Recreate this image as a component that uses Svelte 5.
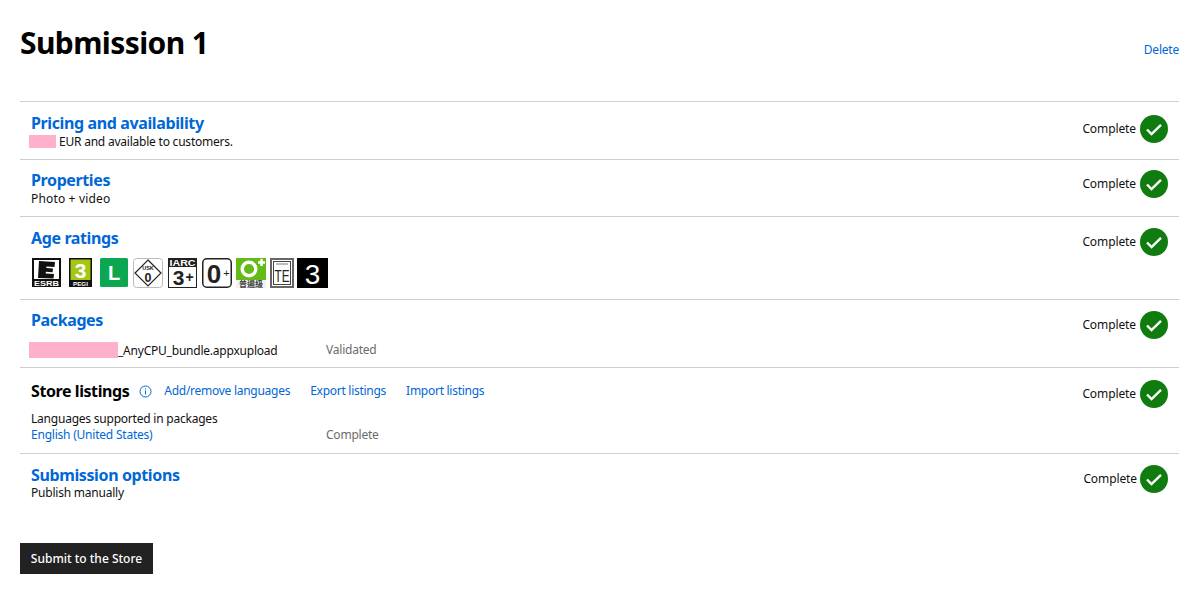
<script>
  const label = 'Complete';
</script>

{#snippet status()}
  <div class="status">
    <span>{label}</span>
    <svg class="ok" viewBox="0 0 28 28" width="28" height="28" aria-hidden="true">
      <circle cx="14" cy="14" r="14" fill="#107c10" />
      <path d="M7 14.500l4.500 4.500L21 9.800" fill="none" stroke="#fff" stroke-width="2.400" />
    </svg>
  </div>
{/snippet}

<main>
  <header>
    <h1>Submission 1</h1>
    <a class="delete" href="#d">Delete</a>
  </header>

  <section class="sections">
    <article class="row r1">
      <div class="body">
        <a class="title" href="#p">Pricing and availability</a>
        <p class="line"><span class="redact price"></span>EUR and available to customers.</p>
      </div>
      {@render status()}
    </article>

    <article class="row r2">
      <div class="body">
        <a class="title" href="#p">Properties</a>
        <p class="line">Photo + video</p>
      </div>
      {@render status()}
    </article>

    <article class="row r3">
      <div class="body">
        <a class="title" href="#a">Age ratings</a>
        <div class="badges">
          <svg width="29" height="29" viewBox="0 0 29 29">
            <rect width="29" height="29" fill="#111" />
            <rect x="2" y="2" width="25" height="19" fill="#fff" />
            <path d="M7 3l16 1-.5 5-8-.5-.2 1.600 6.700.4-.4 3.700-6.700-.4-.2 1.700 8.300.5-.5 4.500L6 20z" fill="#111" />
            <text x="14.500" y="27.500" class="b" font-size="7" fill="#fff" text-anchor="middle" textLength="25" lengthAdjust="spacingAndGlyphs">ESRB</text>
          </svg>
          <svg class="pegi" width="23" height="29" viewBox="0 0 23 29">
            <rect width="23" height="29" fill="#111" />
            <rect x="1.500" y="1.500" width="20" height="20.500" fill="#a4c614" />
            <text x="11.500" y="19.500" class="b" font-size="21" fill="#fff" text-anchor="middle">3</text>
            <text x="11.500" y="27.800" class="b" font-size="6.200" fill="#fff" text-anchor="middle">PEGI</text>
          </svg>
          <svg class="l" width="28" height="29" viewBox="0 0 28 29">
            <rect width="28" height="29" rx="1.500" fill="#0ca750" />
            <text x="14" y="22" class="b" font-size="20" fill="#fff" text-anchor="middle">L</text>
          </svg>
          <svg class="usk" width="30" height="30" viewBox="0 0 30 30">
            <rect x=".5" y=".5" width="29" height="29" rx="3" fill="#fff" stroke="#bbb" />
            <path d="M15 2L28 15 15 28 2 15z" fill="#fff" stroke="#222" stroke-width="1.200" />
            <text x="15" y="11.500" class="b" font-size="5.500" fill="#222" text-anchor="middle">USK</text>
            <text x="15" y="24" class="b" font-size="12.500" fill="#222" text-anchor="middle">0</text>
          </svg>
          <svg class="iarc" width="29" height="30" viewBox="0 0 29 30">
            <rect x=".5" y=".5" width="28" height="29" fill="#fff" stroke="#222" />
            <rect x=".5" y=".5" width="28" height="8.500" fill="#222" />
            <text x="14.500" y="8" class="b" font-size="9" fill="#fff" text-anchor="middle" textLength="26" lengthAdjust="spacingAndGlyphs">IARC</text>
            <text x="10.500" y="27" class="b" font-size="21" fill="#222" text-anchor="middle">3</text>
            <text x="21.500" y="24" class="b" font-size="14" fill="#222" text-anchor="middle">+</text>
          </svg>
          <svg class="zero" width="30" height="30" viewBox="0 0 30 30">
            <rect x=".75" y=".75" width="28.500" height="28.500" rx="4" fill="#fff" stroke="#222" stroke-width="1.500" />
            <text x="12" y="25" class="b" font-size="26" fill="#222" text-anchor="middle">0</text>
            <text x="24.500" y="19" class="t" font-size="11" fill="#222" text-anchor="middle">+</text>
          </svg>
          <svg class="tw" width="30" height="30" viewBox="0 0 30 30">
            <rect width="30" height="30" fill="#f2f2f2" />
            <rect width="30" height="22" fill="#63bb17" />
            <circle cx="13" cy="11" r="6.800" fill="none" stroke="#fff" stroke-width="3.400" />
            <path d="M25.500 1v7M22 4.500h7" stroke="#fff" stroke-width="2.500" />
            <text x="15" y="29" class="c" font-size="8" fill="#444" text-anchor="middle">普遍級</text>
          </svg>
          <svg class="te" width="24" height="30" viewBox="0 0 24 30">
            <rect width="24" height="30" fill="#666" />
            <rect x="2" y="2" width="20" height="26" fill="#fff" />
            <rect x="3.500" y="3.500" width="17" height="23" fill="none" stroke="#444" />
            <rect x="6" y="5" width="12" height="2" fill="#bbb" />
            <text x="12" y="23.500" class="t" font-size="16" fill="#222" text-anchor="middle" textLength="15" lengthAdjust="spacingAndGlyphs">TE</text>
          </svg>
          <svg class="three" width="31" height="30" viewBox="0 0 31 30">
            <rect width="31" height="30" fill="#000" />
            <text x="15.500" y="25.500" class="t" font-size="28" fill="#fff" text-anchor="middle">3</text>
          </svg>
        </div>
      </div>
      {@render status()}
    </article>

    <article class="row r4">
      <div class="body">
        <a class="title" href="#p">Packages</a>
        <div class="table">
          <span class="cell"><span class="redact pkg"></span>_AnyCPU_bundle.appxupload</span>
          <span class="muted">Validated</span>
        </div>
      </div>
      {@render status()}
    </article>

    <article class="row r5">
      <div class="body">
        <div class="toolbar">
          <strong>Store listings</strong>
          <svg class="info" width="13" height="13" viewBox="0 0 13 13" aria-hidden="true">
            <circle cx="6.500" cy="6.500" r="5.500" fill="none" stroke="#0067d6" />
            <path d="M6.500 5.500v4M6.500 3.300v1.200" stroke="#0067d6" />
          </svg>
          <a href="#l" class="first">Add/remove languages</a>
          <a href="#e">Export listings</a>
          <a href="#i">Import listings</a>
        </div>
        <p class="line supported">Languages supported in packages</p>
        <div class="table lang">
          <a class="cell" href="#en">English (United States)</a>
          <span class="muted">Complete</span>
        </div>
      </div>
      {@render status()}
    </article>

    <article class="row r6">
      <div class="body">
        <a class="title" href="#o">Submission options</a>
        <p class="line">Publish manually</p>
      </div>
      {@render status()}
    </article>
  </section>

  <button type="button">Submit to the Store</button>
</main>

<style>
  :global(body) {
    margin: 0;
    background: #fff;
  }
  main {
    padding: 0 21px 0 20px;
    font: 12px/16px "Noto Sans", "Open Sans", sans-serif;
    letter-spacing: -0.22px;
    color: #111;
    height: 595px;
    box-sizing: border-box;
    overflow: hidden;
  }
  a {
    color: #0067d6;
    text-decoration: none;
  }
  header {
    display: flex;
    justify-content: space-between;
    align-items: flex-end;
    height: 101px;
    box-sizing: border-box;
    padding-top: 23px;
  }
  h1 {
    margin: 0;
    align-self: flex-start;
    font-size: 30px;
    line-height: 40px;
    font-weight: 700;
    color: #000;
    letter-spacing: -0.6px;
  }
  .delete {
    align-self: flex-start;
    margin-top: 19px;
  }
  .row {
    display: flex;
    justify-content: space-between;
    align-items: flex-start;
    border-top: 1px solid #cfcfcf;
    padding: 0 11px;
    box-sizing: border-box;
  }
  .r1 { height: 58px; padding-top: 11px; }
  .r1 .line { margin-top: 1px; }
  .r1 .status { margin-top: 2px; }
  .r2 { height: 57px; padding-top: 10px; }
  .r2 .line { margin-top: 1px; letter-spacing: 0.16px; }
  .r3 { height: 83px; padding-top: 11px; }
  .r4 { height: 68px; padding-top: 10px; }
  .r4 .status { margin-top: 1px; }
  .r5 { height: 86px; padding-top: 13px; }
  .r5 .status { margin-top: -1px; }
  .r6 { height: 70px; padding-top: 11px; }
  .r6 .status { gap: 3px; }
  .title {
    display: block;
    font-size: 16px;
    line-height: 20px;
    font-weight: 700;
    letter-spacing: -0.38px;
  }
  .line {
    margin: 0;
    line-height: 16px;
  }
  .redact {
    display: inline-block;
    background: #ffb0cb;
  }
  .price {
    width: 27px;
    height: 13px;
    margin: 0 3px 0 -2px;
    vertical-align: -2px;
  }
  .pkg {
    width: 89px;
    height: 16px;
    margin-left: -2px;
    vertical-align: -3px;
  }
  .badges {
    display: flex;
    align-items: flex-start;
    margin-top: 10px;
    margin-left: 1px;
  }
  .pegi { margin-left: 8px; }
  .l { margin-left: 8px; }
  .usk { margin-left: 5px; }
  .iarc { margin-left: 5px; }
  .zero { margin-left: 5px; }
  .tw { margin-left: 4px; }
  .te { margin-left: 4px; }
  .three { margin-left: 3px; }
  .b { font-family: "Liberation Sans", sans-serif; font-weight: 700; letter-spacing: 0; }
  .t { font-family: "Liberation Sans", sans-serif; letter-spacing: 0; }
  .c { font-family: "Noto Sans CJK TC", sans-serif; font-weight: 700; letter-spacing: 0; }
  .table {
    display: grid;
    grid-template-columns: 295px auto;
    margin-top: 12px;
  }
  .muted { color: #6b6b6b; }
  .toolbar {
    display: flex;
    align-items: center;
    height: 20px;
  }
  .toolbar strong {
    font-size: 16px;
    font-weight: 700;
    color: #000;
    letter-spacing: -0.42px;
  }
  .toolbar a { margin-left: 20px; letter-spacing: -0.27px; }
  .toolbar a.first { margin-left: 12px; }
  .info { margin-left: 10px; }
  .supported { margin-top: 10px; }
  .lang { margin-top: 0; }
  .status {
    display: flex;
    align-items: center;
    gap: 4px;
    letter-spacing: -0.1px;
  }
  .ok { display: block; }
  button {
    display: block;
    margin-top: 20px;
    width: 133px;
    height: 31px;
    border: 0;
    background: #222;
    color: #fff;
    font: inherit;
    font-weight: 500;
    letter-spacing: 0;
    padding: 0;
  }
</style>
